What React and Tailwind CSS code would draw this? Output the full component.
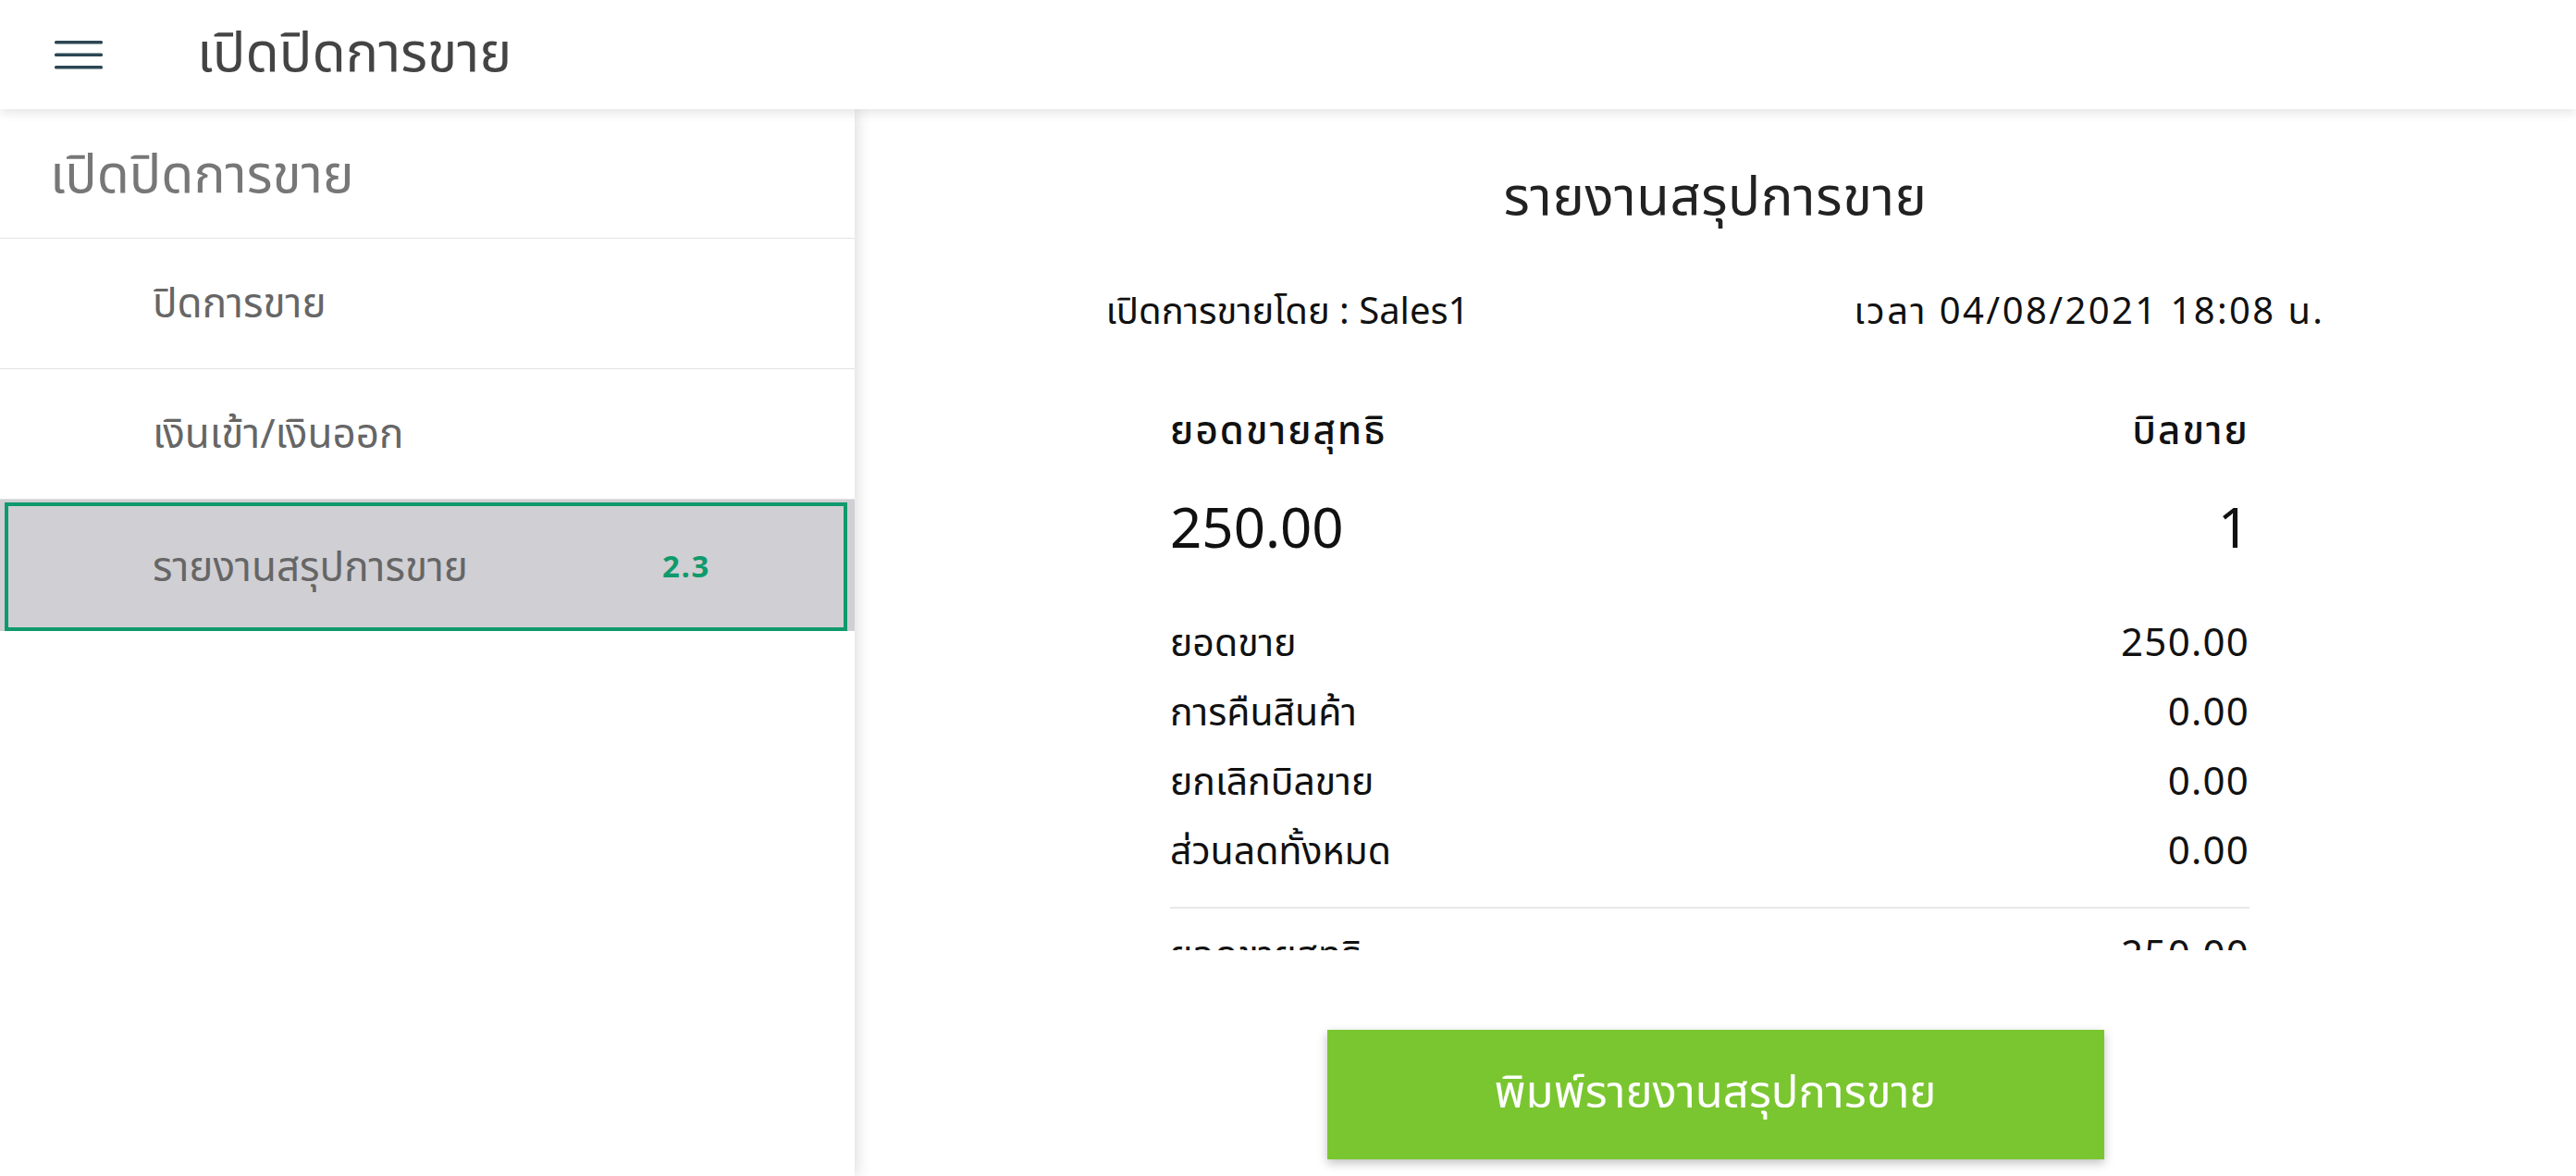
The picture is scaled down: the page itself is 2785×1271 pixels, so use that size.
const font = { fontFamily: "'Noto Sans Thai', 'Noto Sans', Roboto, sans-serif" };

const MenuIcon = () => (
  <svg width="52" height="34" viewBox="0 0 52 34" className="block">
    <rect x="0" y="2" width="52" height="3.5" rx="1.5" fill="#2c4653" />
    <rect x="0" y="15.5" width="52" height="3.5" rx="1.5" fill="#2c4653" />
    <rect x="0" y="29" width="52" height="3.5" rx="1.5" fill="#2c4653" />
  </svg>
);

const rows = [
  ['ยอดขาย', '250.00'],
  ['การคืนสินค้า', '0.00'],
  ['ยกเลิกบิลขาย', '0.00'],
  ['ส่วนลดทั้งหมด', '0.00'],
];

const SideItem = ({ label, badge, active }) =>
  active ? (
    <div className="h-[142px] bg-[#d0cfd4] pt-[3px] pl-[5px] pr-[8px]">
      <div className="h-[139px] border-4 border-[#0f9a6c] flex items-center pl-[156px] pt-[4px]">
        <span className="text-[44px] text-[#666] w-[551px]">{label}</span>
        <span className="text-[33px] font-bold tracking-[0.05em] text-[#0f9a6c]">{badge}</span>
      </div>
    </div>
  ) : (
    <div className="h-[141px] border-b border-[#e2e2e2] flex items-center pl-[165px] pt-[4px]">
      <span className="text-[44px] text-[#666]">{label}</span>
    </div>
  );

export default function App() {
  return (
    <div className="w-[2785px] h-[1271px] overflow-hidden bg-white flex flex-col" style={font}>
      <header className="h-[118px] shrink-0 bg-white flex items-center relative z-20 shadow-[0_3px_12px_rgba(0,0,0,0.12)]">
        <div className="pl-[59px] pr-[102px]">
          <MenuIcon />
        </div>
        <h1 className="text-[59px] text-[#444] leading-none">เปิดปิดการขาย</h1>
      </header>

      <div className="flex flex-1 min-h-0">
        <aside className="w-[924px] shrink-0 bg-white relative z-10 shadow-[4px_0_14px_rgba(0,0,0,0.12)]">
          <div className="h-[140px] border-b border-[#e2e2e2] flex items-center pl-[54px] pt-[8px]">
            <span className="text-[57px] text-[#777]">เปิดปิดการขาย</span>
          </div>
          <SideItem label="ปิดการขาย" />
          <SideItem label="เงินเข้า/เงินออก" />
          <SideItem label="รายงานสรุปการขาย" badge="2.3" active />
        </aside>

        <main className="flex-1 bg-white flex flex-col items-center">
          <div className="w-full h-[909px] overflow-hidden flex flex-col items-center">
            <h2 className="mt-[56px] h-[80px] leading-[80px] text-[58px] tracking-[0.01em] text-[#222]">รายงานสรุปการขาย</h2>
            <div className="mt-[54px] w-[1318px] h-[60px] flex justify-between items-center text-[40px] text-[#111]">
              <span>เปิดการขายโดย : Sales1</span>
              <span className="tracking-[0.06em]">เวลา 04/08/2021 18:08 น.</span>
            </div>
            <div className="w-[1167px] mr-[12px] mt-[74px]">
              <div className="h-[50px] flex justify-between items-center text-[42px] font-medium tracking-[0.05em] text-[#111]">
                <span>ยอดขายสุทธิ</span>
                <span>บิลขาย</span>
              </div>
              <div className="mt-[47px] h-[70px] flex justify-between items-center text-[60px] text-[#111]">
                <span>250.00</span>
                <span>1</span>
              </div>
              <div className="mt-[50px]">
                {rows.map(([k, v]) => (
                  <div key={k} className="h-[75px] flex justify-between items-center text-[#111]">
                    <span className="text-[41px]">{k}</span>
                    <span className="text-[42px] tracking-[0.03em]">{v}</span>
                  </div>
                ))}
              </div>
              <div className="mt-[21px] border-t-2 border-[#e8e8e8]" />
              <div className="mt-[14px] h-[75px] flex justify-between items-center text-[#111]">
                <span className="text-[41px]">ยอดขายสุทธิ</span>
                <span className="text-[42px] tracking-[0.03em]">250.00</span>
              </div>
            </div>
          </div>
          <button className="mt-[86px] w-[840px] h-[140px] bg-[#7ac630] text-white text-[49px] shadow-[0_4px_10px_rgba(0,0,0,0.25)]">
            พิมพ์รายงานสรุปการขาย
          </button>
        </main>
      </div>
    </div>
  );
}
